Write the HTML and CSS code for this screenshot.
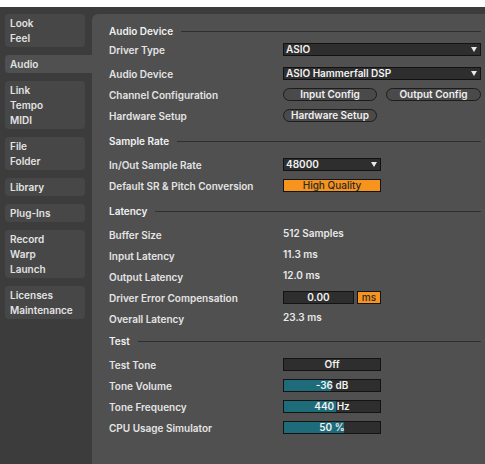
FILE: index.html
```html
<!DOCTYPE html>
<html lang="en">
<head>
<meta charset="UTF-8">
<title>Preferences</title>
<link rel="stylesheet" href="styles.css">
</head>
<body>
<div class="topStrip"></div>
<div class="window">
    <div class="tabs">
        <div class="tab"><span>Look</span><span>Feel</span></div>
        <div class="tab selected"><span>Audio</span></div>
        <div class="tab"><span>Link</span><span>Tempo</span><span>MIDI</span></div>
        <div class="tab"><span>File</span><span>Folder</span></div>
        <div class="tab"><span>Library</span></div>
        <div class="tab"><span>Plug-Ins</span></div>
        <div class="tab"><span>Record</span><span>Warp</span><span>Launch</span></div>
        <div class="tab"><span>Licenses</span><span>Maintenance</span></div>
    </div>

    <div class="panel">
        <div class="section first">
            <div class="head"><span>Audio Device</span><i></i></div>
            <div class="row"><label>Driver Type</label>
                <div class="chooser wide">ASIO<b></b></div></div>
            <div class="row gap"><label>Audio Device</label>
                <div class="chooser wide">ASIO Hammerfall DSP<b></b></div></div>
            <div class="row"><label>Channel Configuration</label>
                <div class="pills"><div class="pill">Input Config</div><div class="pill">Output Config</div></div></div>
            <div class="row"><label>Hardware Setup</label>
                <div class="pill">Hardware Setup</div></div>
        </div>

        <div class="section">
            <div class="head"><span>Sample Rate</span><i></i></div>
            <div class="row"><label>In/Out Sample Rate</label>
                <div class="chooser">48000<b></b></div></div>
            <div class="row"><label>Default SR &amp; Pitch Conversion</label>
                <div class="toggle on">High Quality</div></div>
        </div>

        <div class="section">
            <div class="head"><span>Latency</span><i></i></div>
            <div class="row"><label>Buffer Size</label><span class="value">512 Samples</span></div>
            <div class="row"><label>Input Latency</label><span class="value">11.3 ms</span></div>
            <div class="row"><label>Output Latency</label><span class="value">12.0 ms</span></div>
            <div class="row"><label>Driver Error Compensation</label>
                <div class="number">0.00</div><div class="unit">ms</div></div>
            <div class="row"><label>Overall Latency</label><span class="value">23.3 ms</span></div>
        </div>

        <div class="section last">
            <div class="head"><span>Test</span><i></i></div>
            <div class="row"><label>Test Tone</label><div class="toggle">Off</div></div>
            <div class="row"><label>Tone Volume</label>
                <div class="slider"><div class="fill" style="width: 49%"></div><span>-36 dB</span></div></div>
            <div class="row"><label>Tone Frequency</label>
                <div class="slider"><div class="fill" style="width: 54%"></div><span>440 Hz</span></div></div>
            <div class="row"><label>CPU Usage Simulator</label>
                <div class="slider"><div class="fill" style="width: 62%"></div><span>50 %</span></div></div>
        </div>
    </div>
</div>
</body>
</html>
```

FILE: styles.css
```css
* {
    box-sizing: border-box;
}

body {
    margin: 0;
    background-color: #3c3c3c;
    color: #e4e4e4;
    font-family: "Inter", "Liberation Sans", sans-serif;
    font-size: 10px;
    font-weight: 600;
}

.topStrip {
    height: 7px;
    background-color: #ffffff;
}

.window {
    display: flex;
    height: 457px;
    padding-top: 7px;
}

/* left column with the preference tabs */
.tabs {
    width: 92px;
    padding-left: 5px;
    display: flex;
    flex-direction: column;
    gap: 8px;
}

.tab {
    width: 80px;
    background-color: #474747;
    border-radius: 4px;
    padding: 2px 5px 1px 5px;
    display: flex;
    flex-direction: column;
    color: #e2e2e2;
}

.tab span {
    line-height: 15px;
}

.tab.selected {
    width: 87px;
    background-color: #505050;
    border-radius: 4px 0 0 4px;
}

.panel {
    flex: 1;
    background-color: #505050;
    border-top-left-radius: 6px;
    padding: 7px 10px 0 17px;
}

.section {
    margin-top: 5px;
}

.section.first {
    margin-top: 0;
}

.section.last {
    margin-top: 2px;
}

.head {
    height: 20px;
    display: flex;
    align-items: center;
    gap: 8px;
    color: #f0f0f0;
    margin-bottom: 3px;
}

.first .head {
    margin-bottom: -2px;
}

.head i {
    flex: 1;
    height: 1px;
    background-color: #2f2f2f;
}

.row {
    height: 21px;
    display: flex;
    align-items: center;
}

.row.gap {
    margin-top: 3px;
}

.row label {
    width: 174px;
}

/* drop-down choosers */
.chooser {
    position: relative;
    width: 98px;
    height: 13px;
    background-color: #2e2e2e;
    border: 1px solid #121212;
    padding-left: 2px;
    line-height: 11px;
    color: #f2f2f2;
}

.chooser.wide {
    width: 198px;
}

.chooser b {
    position: absolute;
    right: 3px;
    top: 3px;
    border-left: 3.5px solid transparent;
    border-right: 3.5px solid transparent;
    border-top: 5px solid #e8e8e8;
}

.pills {
    display: flex;
    gap: 9px;
}

.pill {
    width: 94px;
    height: 13px;
    border: 1px solid #1c1c1c;
    border-radius: 7px;
    background-color: #4a4a4a;
    text-align: center;
    line-height: 11px;
    color: #f0f0f0;
}

.pills .pill:last-child {
    width: 95px;
}

.pill:only-child {
    width: 98px;
}

.toggle {
    width: 98px;
    height: 13px;
    background-color: #2e2e2e;
    border: 1px solid #141414;
    text-align: center;
    line-height: 11px;
    color: #f2f2f2;
}

.toggle.on {
    background-color: #f7941e;
    color: #2a2a2a;
    font-weight: 500;
}

.value {
    margin-top: -4px;
    color: #e8e8e8;
}

.number {
    width: 71px;
    height: 13px;
    background-color: #2e2e2e;
    border: 1px solid #141414;
    text-align: center;
    line-height: 11px;
    color: #f2f2f2;
}

.unit {
    width: 24px;
    height: 13px;
    margin-left: 3px;
    background-color: #f7941e;
    border: 1px solid #141414;
    text-align: center;
    line-height: 11px;
    color: #2a2a2a;
    font-weight: 500;
}

/* value sliders */
.slider {
    position: relative;
    width: 98px;
    height: 13px;
    background-color: #2e2e2e;
    border: 1px solid #141414;
    text-align: center;
    line-height: 11px;
    color: #f2f2f2;
}

.slider .fill {
    position: absolute;
    left: 0;
    top: 0;
    bottom: 0;
    background-color: #1e6b7a;
}

.slider span {
    position: relative;
}
```
